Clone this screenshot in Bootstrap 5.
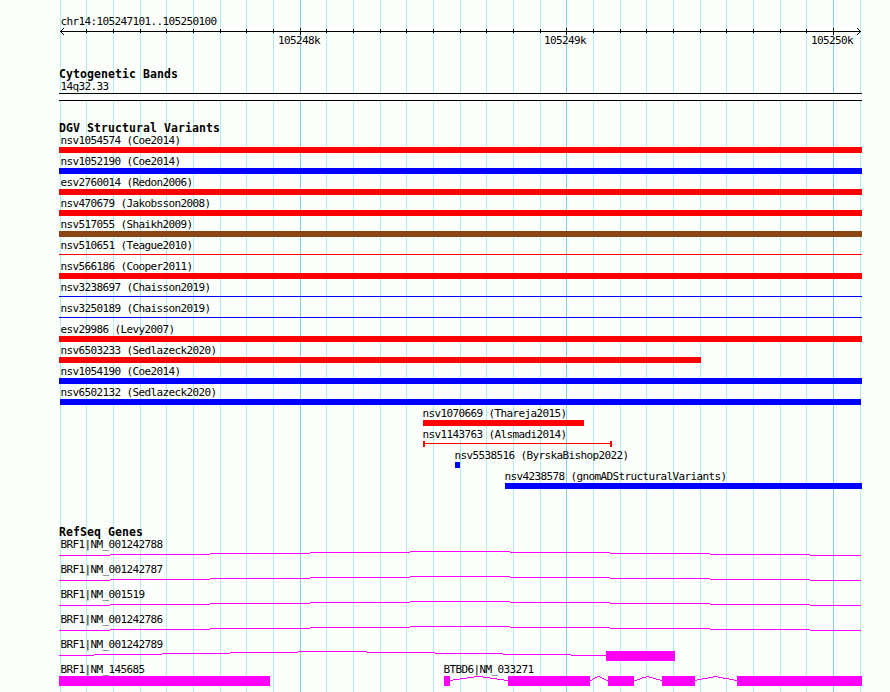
<!DOCTYPE html>
<html lang="en">
<head>
<meta charset="utf-8">
<meta name="viewport" content="width=device-width, initial-scale=1">
<title>chr14:105247101..105250100</title>
<link href="https://cdn.jsdelivr.net/npm/bootstrap@5.3.0/dist/css/bootstrap.min.css" rel="stylesheet">
<style>
body{background:#fdfffc;color:#000;font:11px/13px "DejaVu Sans Mono",monospace;letter-spacing:-.622px;height:692px}
.browser{width:890px;height:692px;padding-left:59px}
.browser svg{display:block;shape-rendering:crispEdges}
.grid-lines{left:0;top:0;z-index:-1}
.lbl{height:13px;padding-left:1.5px;white-space:pre}
.ttl{font-size:11.5px;line-height:13px;height:12px;font-weight:700;letter-spacing:.077px;margin:0;white-space:pre}
.ruler-track{height:68px;padding-top:15px}
.tick-row{margin-top:-1px}
.cyto{height:54px}
.band{width:803px;height:8px;border:solid #000;border-width:1px 0;background:#fdfffc}
.variants{height:404px}
.glyph{height:6px}
.v-red{background:#f00}.v-blue{background:#00f}.v-brown{background:#8b4513}
.hair{height:1px;margin-top:2px}
.capped{border:solid #f00;border-width:0 2px;height:6px;padding-top:2px}
.capped>div{height:1px;background:#f00}
.gene{height:25px}
</style>
<script src="https://cdn.jsdelivr.net/npm/bootstrap@5.3.0/dist/js/bootstrap.bundle.min.js"></script>
</head>
<body class="overflow-hidden">
<main class="browser position-relative d-flex flex-column overflow-hidden">
  <svg class="grid-lines position-absolute" id="grid" width="890" height="692"></svg>
  <section class="ruler-track">
    <div class="lbl">chr14:105247101..105250100</div>
    <svg id="ruler" width="804" height="7"></svg>
    <div class="tick-row d-flex" id="ticks"></div>
  </section>
  <section class="cyto">
    <h2 class="ttl">Cytogenetic Bands</h2>
    <div class="lbl">14q32.33</div>
    <div class="band"></div>
  </section>
  <section class="variants">
    <h2 class="ttl">DGV Structural Variants</h2>
    <div class="d-flex flex-column" id="variants"></div>
  </section>
  <section>
    <h2 class="ttl">RefSeq Genes</h2>
    <div id="genes"></div>
  </section>
</main>
<script>
const X0 = 59;
const rect = (x,y,w,h,c) => `<rect x="${x}" y="${y}" width="${w}" height="${h}" fill="${c}"/>`;

// Vertical guides every 100 bp, darker at each kilobase
let g = '', r = rect(1,3,801,1,'#000');
for (let i = 0; i <= 30; i++) {
  const x = Math.floor(60 + i*80/3 + .01), major = i % 10 === 9;
  g += rect(x,0,1,692, major ? '#87ceeb' : '#afeeee');
  if (i && i < 30) r += major ? rect(x-X0,0,1,7,'#000') : rect(x-X0,1,1,4,'#000');
}
for (let k = 1; k <= 3; k++) r += rect(1+k,3-k,1,1,'#000') + rect(1+k,3+k,1,1,'#000') + rect(801-k,3-k,1,1,'#000') + rect(801-k,3+k,1,1,'#000');
document.getElementById('grid').innerHTML = g;
document.getElementById('ruler').innerHTML = r;
let end = X0;
document.getElementById('ticks').innerHTML = [['105248k',278],['105249k',544],['105250k',811]].map(([t,x]) => {
  const m = x - end; end = x + 44;
  return `<div class="lbl ps-0" style="width:44px;margin-left:${m}px">${t}</div>`;
}).join('');

// Structural variants: label, colour, start, end, shape
const variants = [
  ['nsv1054574 (Coe2014)','red',59,862],['nsv1052190 (Coe2014)','blue',59,862],
  ['esv2760014 (Redon2006)','red',59,862],['nsv470679 (Jakobsson2008)','red',59,862],
  ['nsv517055 (Shaikh2009)','brown',59,862],['nsv510651 (Teague2010)','red',59,862,'hair'],
  ['nsv566186 (Cooper2011)','red',59,862],['nsv3238697 (Chaisson2019)','blue',59,862,'hair'],
  ['nsv3250189 (Chaisson2019)','blue',59,862,'hair'],['esv29986 (Levy2007)','red',59,862],
  ['nsv6503233 (Sedlazeck2020)','red',59,701],['nsv1054190 (Coe2014)','blue',59,862],
  ['nsv6502132 (Sedlazeck2020)','blue',60,861],['nsv1070669 (Thareja2015)','red',423,584],
  ['nsv1143763 (Alsmadi2014)','red',423,612,'capped'],['nsv5538516 (ByrskaBishop2022)','blue',455,460],
  ['nsv4238578 (gnomADStructuralVariants)','blue',505,862]];
document.getElementById('variants').innerHTML = variants.map(([t,c,a,b,s]) => {
  const pos = `style="margin-left:${a-X0}px;width:${b-a}px"`;
  const shape = s === 'capped' ? `<div class="capped" ${pos}><div></div></div>`
    : `<div class="glyph d-flex"><div class="v-${c} ${s || 'glyph'}" ${pos}></div></div>`;
  return `<div style="height:21px"><div class="lbl" style="margin-left:${Math.max(0,a-X0-2)}px">${t}</div>${shape}</div>`;
}).join('');

// Genes: introns are stepped runs [x, y, x, y, ..., end], exons are boxes
const M = '#f0f';
const long = [59,4,110,3,210,2,310,1,410,0,510,1,610,2,710,3,810,4,861];
const genes = [
  [[['BRF1|NM_001242788',59]],[long],[]],
  [[['BRF1|NM_001242787',59]],[long],[]],
  [[['BRF1|NM_001519',59]],[long],[]],
  [[['BRF1|NM_001242786',59]],[long],[]],
  [[['BRF1|NM_001242789',59]],[[59,4,94,3,162,2,230,1,298,0,367,1,435,2,503,3,571,4,606]],[[606,675]]],
  [[['BRF1|NM_145685',59],['BTBD6|NM_033271',442]],
   [[450,4,453,3,460,2,467,1,474,0,483,1,490,2,497,3,504,4,508],[590,4,592,3,593,2,595,1,597,0,600,1,602,2,604,3,606,4,608],
    [634,4,637,3,640,2,642,1,646,0,649,1,653,2,656,3,660,4,662],[695,4,697,3,702,2,708,1,713,0,718,1,723,2,729,3,734,4,737]],
   [[59,270],[444,450],[508,590],[608,634],[662,695],[737,862]]]];
document.getElementById('genes').innerHTML = genes.map(([ls,ins,ex]) => {
  let s = '', e = X0;
  for (const a of ins) for (let i = 0; i + 2 < a.length; i += 2) s += rect(a[i]-X0,a[i+1],a[i+2]-a[i],1,M);
  for (const [a,b] of ex) s += rect(a-X0,0,b-a,10,M);
  const labels = ls.map(([t,x]) => { const m = x-e; e = x+110; return `<div class="lbl" style="width:110px;margin-left:${m}px">${t}</div>`; }).join('');
  return `<div class="gene"><div class="d-flex">${labels}</div><svg width="803" height="12">${s}</svg></div>`;
}).join('');
</script>
</body>
</html>
